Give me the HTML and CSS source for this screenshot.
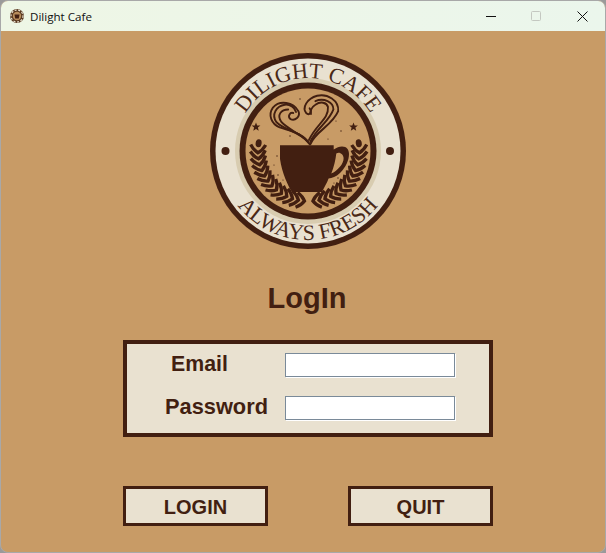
FILE: index.html
```html
<!DOCTYPE html>
<html>
  <head>
    <title>Dilight Cafe</title>
    <link rel="stylesheet" href="styles.css">
  </head>
  <body>
    <div class="window">
      <div class="titlebar">
        <svg class="app-icon" width="16" height="16" viewBox="0 0 16 16">
          <circle cx="8" cy="8" r="7" fill="#5a3a22" />
          <circle cx="8" cy="8" r="6" fill="none" stroke="#e9e1d0" stroke-width="1.2" stroke-dasharray="2 1.6" />
          <circle cx="8" cy="8" r="4.2" fill="#b98d5c" />
          <path d="M5.5 6.5h5l-.7 4h-3.6z" fill="#421f11" />
        </svg>
        <span class="app-name">Dilight Cafe</span>
        <div class="controls">
          <svg class="ctl" width="46" height="30" viewBox="0 0 46 30">
            <path d="M7 15.5h10" stroke="#111" stroke-width="1" />
          </svg>
          <svg class="ctl" width="46" height="30" viewBox="0 0 46 30">
            <rect x="6.5" y="10.5" width="9" height="9" rx="1" fill="none" stroke="#c4c8c1" />
          </svg>
          <svg class="ctl" width="30" height="30" viewBox="0 0 30 30">
            <path d="M6.5 10.5l10 10M16.5 10.5l-10 10" stroke="#111" stroke-width="1" />
          </svg>
        </div>
      </div>

      <div class="content">
        <svg class="logo" width="198" height="198" viewBox="-99 -99 198 198">
          <defs>
            <path id="arc-top" d="M-73 0A73 73 0 0 1 73 0" />
            <path id="arc-bottom" d="M-89 0A89 89 0 0 0 89 0" />
            <path id="chevron" d="M-4.5 -7.5Q1 -4.5 3.5 0Q1 4.5 -4.5 7.5" fill="none" stroke="#421f11" stroke-width="3.3" />
            <g id="wreath">
              <use href="#chevron" transform="rotate(8) translate(0 50)" />
              <use href="#chevron" transform="rotate(15) translate(0 50)" />
              <use href="#chevron" transform="rotate(22) translate(0 50)" />
              <use href="#chevron" transform="rotate(29) translate(0 50)" />
              <use href="#chevron" transform="rotate(36) translate(0 50)" />
              <use href="#chevron" transform="rotate(43) translate(0 50)" />
              <use href="#chevron" transform="rotate(50) translate(0 50)" />
              <use href="#chevron" transform="rotate(57) translate(0 50)" />
              <use href="#chevron" transform="rotate(64) translate(0 50)" />
              <use href="#chevron" transform="rotate(71) translate(0 50)" />
              <use href="#chevron" transform="rotate(78) translate(0 50)" />
              <use href="#chevron" transform="rotate(85) translate(0 50)" />
              <use href="#chevron" transform="rotate(92) translate(0 50)" />
              <ellipse cx="0" cy="0" rx="4" ry="3" fill="#421f11" transform="rotate(99) translate(0 50)" />
            </g>
            <path id="star" d="M0 -4.6L1.2 -1.5L4.4 -1.4L1.9 .6L2.7 3.7L0 2L-2.7 3.7L-1.9 .6L-4.4 -1.4L-1.2 -1.5Z" fill="#421f11" />
          </defs>

          <circle r="98" fill="#421f11" />
          <circle r="92.5" fill="#e9e1d0" />
          <circle r="73" fill="#d8ccb0" />
          <circle r="68.5" fill="#421f11" />
          <circle r="62.5" fill="#c89b66" />

          <text class="logo-text" font-size="22" text-anchor="middle">
            <textPath href="#arc-top" startOffset="50%">DILIGHT CAFE</textPath>
          </text>
          <text class="logo-text" font-size="22" text-anchor="middle">
            <textPath href="#arc-bottom" startOffset="50%">ALWAYS FRESH</textPath>
          </text>

          <circle cx="-82.5" cy="0" r="4" fill="#421f11" />
          <circle cx="82" cy="0" r="4" fill="#421f11" />
          <use href="#star" x="-52" y="-24" />
          <use href="#star" x="45.5" y="-24" />

          <use href="#wreath" />
          <use href="#wreath" transform="translate(1.4 0) scale(-1 1)" />

          <!-- steam -->
          <g transform="translate(-48.7 -65) scale(.34 .36)" fill="none" stroke="#421f11" stroke-width="5.5" stroke-linecap="round">
            <path d="M148 162C130 130 90 125 60 115C35 105 25 80 40 60C60 38 100 45 115 70C122 85 105 98 92 92C82 85 90 72 100 75" />
            <path d="M145 158C120 125 75 125 50 100C35 80 50 55 75 52C90 50 105 60 108 72" />
            <path d="M141 152C115 130 85 120 65 100C50 80 65 65 85 65" />
            <path d="M150 162C165 125 215 110 232 70C235 40 200 20 170 27C140 35 125 60 138 75C148 85 155 70 148 62" />
            <path d="M150 155C170 115 205 100 218 65C218 45 190 32 165 42" />
            <path d="M146 150C168 105 205 92 202 58C198 45 180 42 165 52C152 60 150 70 152 78" />
          </g>
          <!-- cup -->
          <path d="M-28 -5.7H25.7V-1.4C29 -3.5 31 -4.5 34 -4.5C39 -4.5 41 -1 41 3C41 9 38 16 32 22C28 26 24 27 20.6 27.6C19 32 16 37 14 41H-16C-20 35 -26 22 -28 8ZM28.3 2.6C27.5 9 26 16 23.3 22.6C29 20 36 13 35.6 7C35.5 3 31 0 28.3 2.6Z" fill="#421f11" fill-rule="evenodd" />
          <!-- speckles -->
          <g fill="#421f11">
            <circle cx="-31" cy="5" r=".7" />
            <circle cx="-34" cy="14" r=".6" />
            <circle cx="-30" cy="24" r=".7" />
            <circle cx="-25" cy="29" r=".6" />
            <circle cx="30" cy="27" r=".7" />
            <circle cx="26" cy="32" r=".6" />
            <circle cx="33" cy="-20" r=".7" />
            <circle cx="28" cy="-30" r=".6" />
            <circle cx="-8" cy="-52" r=".7" />
            <circle cx="-3" cy="-43" r=".6" />
            <circle cx="-18" cy="-15" r=".7" />
            <circle cx="20" cy="-12" r=".6" />
          </g>
        </svg>

        <h1 class="heading">LogIn</h1>

        <div class="panel">
          <form class="login-form">
            <label class="field-label email-label">Email</label>
            <input class="field-input" type="text" />
            <label class="field-label">Password</label>
            <input class="field-input" type="password" />
          </form>
        </div>

        <div class="actions">
          <button class="action-btn" type="button">LOGIN</button>
          <button class="action-btn" type="button">QUIT</button>
        </div>
      </div>
    </div>
  </body>
</html>
```

FILE: styles.css
```css
html,
body {
  margin: 0;
  height: 100%;
  background: #9a9a9a;
}
body {
  font-family: "Liberation Sans", Arial, sans-serif;
  color: #421f11;
  overflow: hidden;
}
.window {
  width: 606px;
  height: 553px;
  box-sizing: border-box;
  border: 1px solid #a8a8a8;
  border-radius: 8px;
  overflow: hidden;
  display: flex;
  flex-direction: column;
  background: #c89b66;
}
.titlebar {
  height: 30px;
  flex: none;
  display: flex;
  align-items: center;
  padding-left: 8px;
  background: linear-gradient(90deg, #eef6e5, #ebf6ec);
}
.app-icon {
  margin-right: 5px;
}
.app-name {
  font-family: "Open Sans", sans-serif;
  font-size: 11.6px;
  color: #111;
}
.controls {
  margin-left: auto;
  display: flex;
  align-items: center;
  padding-right: 4px;
}
.ctl {
  display: block;
}
.content {
  flex: 1;
  padding: 21px 0 0 122px;
  width: 370px;
}
.logo {
  display: block;
  margin: 0 0 0 86px;
}
.logo-text {
  font-family: "Liberation Serif", "Times New Roman", serif;
  fill: #4a2816;
}
.heading {
  margin: 31px 0 0;
  width: 368px;
  font-size: 29px;
  line-height: 34px;
  text-align: center;
  font-weight: bold;
}
.panel {
  margin-top: 25px;
  box-sizing: border-box;
  width: 370px;
  height: 97px;
  border: 4px solid #421f11;
  background: #e9e1d0;
}
.login-form {
  display: grid;
  grid-template-columns: 158px 170px;
  grid-auto-rows: 24px;
  row-gap: 19px;
  padding-top: 9px;
}
.field-label {
  font-size: 21.8px;
  font-weight: bold;
  line-height: 22px;
  padding-left: 38px;
  white-space: nowrap;
}
.email-label {
  padding-left: 44px;
  font-size: 21.3px;
}
.field-input {
  box-sizing: border-box;
  width: 170px;
  height: 24px;
  margin: 0;
  background: #fff;
  border: 1px solid #7a8a99;
  box-shadow: 1px 1px 0 #fff;
}
.actions {
  margin-top: 49px;
  width: 370px;
  display: flex;
  justify-content: space-between;
}
.action-btn {
  box-sizing: border-box;
  width: 145px;
  height: 40px;
  padding: 2px 0 0;
  border: 3px solid #421f11;
  background: #e9e1d0;
  color: #421f11;
  font-family: "Liberation Sans", Arial, sans-serif;
  font-size: 20px;
  font-weight: bold;
}
```
